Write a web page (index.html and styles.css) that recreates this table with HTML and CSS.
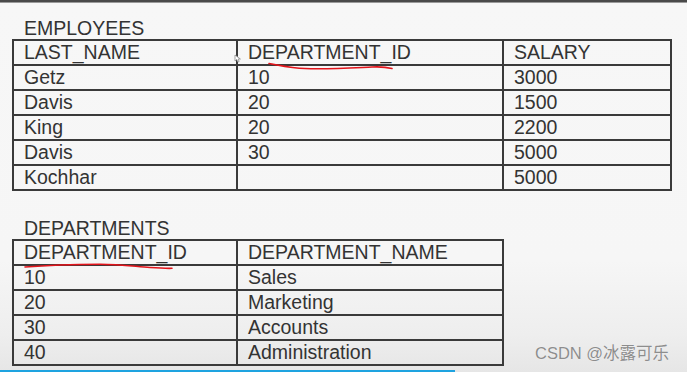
FILE: index.html
```html
<!DOCTYPE html>
<html lang="en">
<head>
<meta charset="utf-8">
<title>Employees and Departments</title>
<link rel="stylesheet" href="styles.css">
</head>
<body>
<div class="screen">
  <div class="topbar"></div>
  <div class="content">
    <section class="block">
      <div class="title">EMPLOYEES</div>
      <table class="grid emp">
        <colgroup><col class="c1"><col class="c2"><col class="c3"></colgroup>
        <tr><td>LAST_NAME</td><td>DEPARTMENT_ID</td><td>SALARY</td></tr>
        <tr><td>Getz</td><td>10</td><td>3000</td></tr>
        <tr><td>Davis</td><td>20</td><td>1500</td></tr>
        <tr><td>King</td><td>20</td><td>2200</td></tr>
        <tr><td>Davis</td><td>30</td><td>5000</td></tr>
        <tr><td>Kochhar</td><td></td><td>5000</td></tr>
      </table>
    </section>
    <section class="block second">
      <div class="title">DEPARTMENTS</div>
      <table class="grid dept">
        <colgroup><col class="c1"><col class="c2"></colgroup>
        <tr><td>DEPARTMENT_ID</td><td>DEPARTMENT_NAME</td></tr>
        <tr><td>10</td><td>Sales</td></tr>
        <tr><td>20</td><td>Marketing</td></tr>
        <tr><td>30</td><td>Accounts</td></tr>
        <tr><td>40</td><td>Administration</td></tr>
      </table>
    </section>
  </div>
  <svg class="ink" width="687" height="372" viewBox="0 0 687 372">
    <path d="M269 63.5 C 280 65.5, 292 68.5, 305 68.5 C 325 69.5, 350 68, 372 67 C 382 66.5, 388 67.5, 392 68.5" fill="none" stroke="#e3141b" stroke-width="1.6" stroke-linecap="round"/>
    <path d="M25 267 C 45 265.5, 70 264.5, 100 264.3 C 120 264.3, 135 266.5, 150 267.5 C 160 268.2, 168 268.4, 172 268.3" fill="none" stroke="#e3141b" stroke-width="1.6" stroke-linecap="round"/>
  </svg>
  <svg class="cursor" width="8" height="9" viewBox="0 0 8 9">
    <path d="M1 1 L1 7 L2.6 5.6 L4 8 L5.2 7.4 L4 5 L6.4 5 Z" fill="#ffffff" stroke="#8a8a8a" stroke-width="0.8"/>
  </svg>
  <div class="watermark">CSDN @冰露可乐</div>
  <div class="progress"></div>
</div>
</body>
</html>
```

FILE: styles.css
```css
html, body {
  margin: 0;
  padding: 0;
}

body {
  width: 687px;
  height: 372px;
  overflow: hidden;
  font-family: "Liberation Sans", Arial, sans-serif;
  color: #333333;
}

.screen {
  position: relative;
  width: 687px;
  height: 372px;
  overflow: hidden;
  background: linear-gradient(to bottom, #f7f7f7 0%, #f6f6f6 70%, #eeeeee 90%, #e6e6e6 100%);
}

.topbar {
  height: 2px;
  background: #4a4a4a;
  border-bottom: 1px solid #9a9a9a;
}

.content {
  padding: 14px 0 0 12px;
}

.title {
  font-size: 19.5px;
  line-height: 22px;
  height: 22px;
  padding-left: 12px;
}

.second {
  margin-top: 26px;
}

.grid {
  border-collapse: collapse;
  table-layout: fixed;
  font-size: 19.5px;
}

.grid td {
  border: 2px solid #3a3a3a;
  height: 23px;
  padding: 0 0 0 10px;
  line-height: 23px;
  white-space: nowrap;
  overflow: hidden;
}

.emp {
  width: 658px;
}

.dept {
  width: 490px;
}

.c1 { width: 224px; }
.c2 { width: 266px; }
.c3 { width: 168px; }

.ink {
  position: absolute;
  left: 0;
  top: 0;
  pointer-events: none;
}

.cursor {
  position: absolute;
  left: 234px;
  top: 54px;
}

.watermark {
  position: absolute;
  left: 535px;
  top: 343px;
  font-family: "Liberation Sans", "Noto Sans CJK SC", sans-serif;
  font-size: 16.5px;
  line-height: 20px;
  color: #8d8d8d;
  text-shadow: 0 0 1px rgba(255, 255, 255, 0.8);
}

.progress {
  position: absolute;
  left: 0;
  bottom: 0;
  width: 455px;
  height: 2px;
  background: #1ea3e0;
}
```
